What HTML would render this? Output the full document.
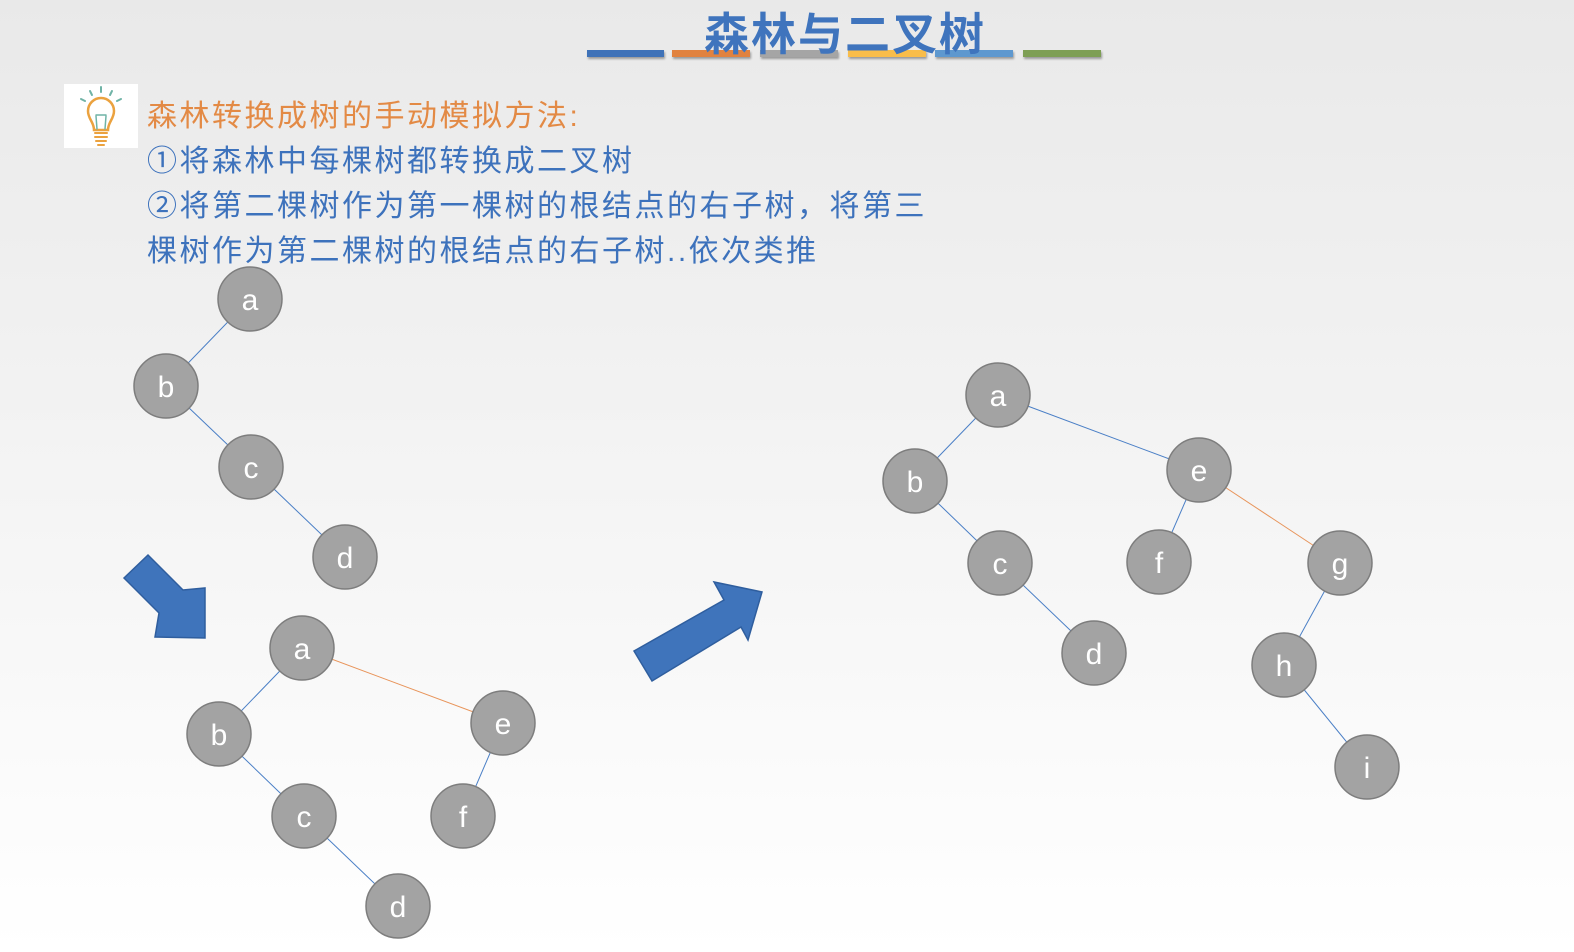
<!DOCTYPE html><html><head><meta charset="utf-8"><style>
body{margin:0;width:1574px;height:952px;overflow:hidden;background:linear-gradient(#e9e9e9,#ffffff);font-family:"Liberation Sans","Noto Sans CJK SC",sans-serif;position:relative}
.t{position:absolute;left:147px;font-size:30px;line-height:45px;color:#3d72bc;white-space:nowrap;letter-spacing:2.5px}
</style></head><body>
<div style="position:absolute;top:50px;left:587px;width:77px;height:7px;background:#3f72b8;box-shadow:1px 2px 2px #999"></div>
<div style="position:absolute;top:50px;left:672px;width:78px;height:7px;background:#e1823f;box-shadow:1px 2px 2px #999"></div>
<div style="position:absolute;top:50px;left:760px;width:78px;height:7px;background:#a5a5a5;box-shadow:1px 2px 2px #999"></div>
<div style="position:absolute;top:50px;left:848px;width:78px;height:7px;background:#f9bd4a;box-shadow:1px 2px 2px #999"></div>
<div style="position:absolute;top:50px;left:935px;width:78px;height:7px;background:#5e98cf;box-shadow:1px 2px 2px #999"></div>
<div style="position:absolute;top:50px;left:1023px;width:78px;height:7px;background:#7e9f55;box-shadow:1px 2px 2px #999"></div>
<div style="position:absolute;left:704px;top:-2px;font-size:45px;font-weight:bold;color:#3f74bd;letter-spacing:2px">森林与二叉树</div>
<div style="position:absolute;left:64px;top:84px;width:74px;height:64px;background:#fff">
<svg width="74" height="64" viewBox="0 0 74 64" fill="none" stroke-linecap="round">
<g stroke="#6fb3a6" stroke-width="2"><line x1="37" y1="3" x2="37" y2="8"/><line x1="26" y1="7" x2="28" y2="11"/><line x1="48" y1="7" x2="46" y2="11"/><line x1="17" y1="15" x2="21" y2="17"/><line x1="57" y1="15" x2="53" y2="17"/></g>
<path d="M30 46 C30 38 24 35 24 27 A13 13 0 0 1 50 27 C50 35 44 38 44 46 Z" stroke="#eba23f" stroke-width="2.5"/>
<path d="M33 45 L32 32 M41 45 L42 32 M32 31 L42 31" stroke="#6fb3a6" stroke-width="1.5"/>
<g stroke="#eba23f" stroke-width="2"><line x1="31" y1="49" x2="43" y2="49"/><line x1="31" y1="53" x2="43" y2="53"/><line x1="32" y1="57" x2="42" y2="57"/><line x1="34" y1="61" x2="40" y2="61"/></g>
</svg></div>
<div class="t" style="top:94px;color:#e38a45">森林转换成树的手动模拟方法:</div>
<div class="t" style="top:139px">①将森林中每棵树都转换成二叉树</div>
<div class="t" style="top:184px">②将第二棵树作为第一棵树的根结点的右子树，将第三</div>
<div class="t" style="top:229px">棵树作为第二棵树的根结点的右子树..依次类推</div>
<svg style="position:absolute;left:0;top:0" width="1574" height="952">
<g stroke-width="1">
<g stroke="#4a7fc6">
<line x1="250" y1="299" x2="166" y2="386"/><line x1="166" y1="386" x2="251" y2="467"/><line x1="251" y1="467" x2="345" y2="557"/>
<line x1="302" y1="648" x2="219" y2="734"/><line x1="219" y1="734" x2="304" y2="816"/><line x1="304" y1="816" x2="398" y2="906"/><line x1="503" y1="723" x2="463" y2="816"/>
<line x1="998" y1="395" x2="915" y2="481"/><line x1="915" y1="481" x2="1000" y2="563"/><line x1="1000" y1="563" x2="1094" y2="653"/><line x1="998" y1="395" x2="1199" y2="470"/><line x1="1199" y1="470" x2="1159" y2="562"/><line x1="1340" y1="563" x2="1284" y2="665"/><line x1="1284" y1="665" x2="1367" y2="767"/>
</g>
<g stroke="#e8945a"><line x1="302" y1="648" x2="503" y2="723"/><line x1="1199" y1="470" x2="1340" y2="563"/></g>
</g>
<polygon points="124,578 148,555 183,590 205,588 205,638 155,637 159,613" fill="#3f74bb" stroke="#2f5e9e" stroke-width="1.5"/>
<polygon points="634,651 724,600 714,582 762,592 748,640 741,627 652,681" fill="#3f74bb" stroke="#2f5e9e" stroke-width="1.5"/>
<g fill="#a3a3a3" stroke="#7d7d7d" stroke-width="1.5">
<circle cx="250" cy="299" r="32"/><circle cx="166" cy="386" r="32"/><circle cx="251" cy="467" r="32"/><circle cx="345" cy="557" r="32"/>
<circle cx="302" cy="648" r="32"/><circle cx="219" cy="734" r="32"/><circle cx="304" cy="816" r="32"/><circle cx="398" cy="906" r="32"/><circle cx="503" cy="723" r="32"/><circle cx="463" cy="816" r="32"/>
<circle cx="998" cy="395" r="32"/><circle cx="915" cy="481" r="32"/><circle cx="1000" cy="563" r="32"/><circle cx="1094" cy="653" r="32"/><circle cx="1199" cy="470" r="32"/><circle cx="1159" cy="562" r="32"/><circle cx="1340" cy="563" r="32"/><circle cx="1284" cy="665" r="32"/><circle cx="1367" cy="767" r="32"/>
</g>
<g fill="#fff" font-family="Liberation Sans" font-size="30" text-anchor="middle">
<text x="250" y="310">a</text><text x="166" y="397">b</text><text x="251" y="478">c</text><text x="345" y="568">d</text>
<text x="302" y="659">a</text><text x="219" y="745">b</text><text x="304" y="827">c</text><text x="398" y="917">d</text><text x="503" y="734">e</text><text x="463" y="827">f</text>
<text x="998" y="406">a</text><text x="915" y="492">b</text><text x="1000" y="574">c</text><text x="1094" y="664">d</text><text x="1199" y="481">e</text><text x="1159" y="573">f</text><text x="1340" y="574">g</text><text x="1284" y="676">h</text><text x="1367" y="778">i</text>
</g>
</svg>
</body></html>
